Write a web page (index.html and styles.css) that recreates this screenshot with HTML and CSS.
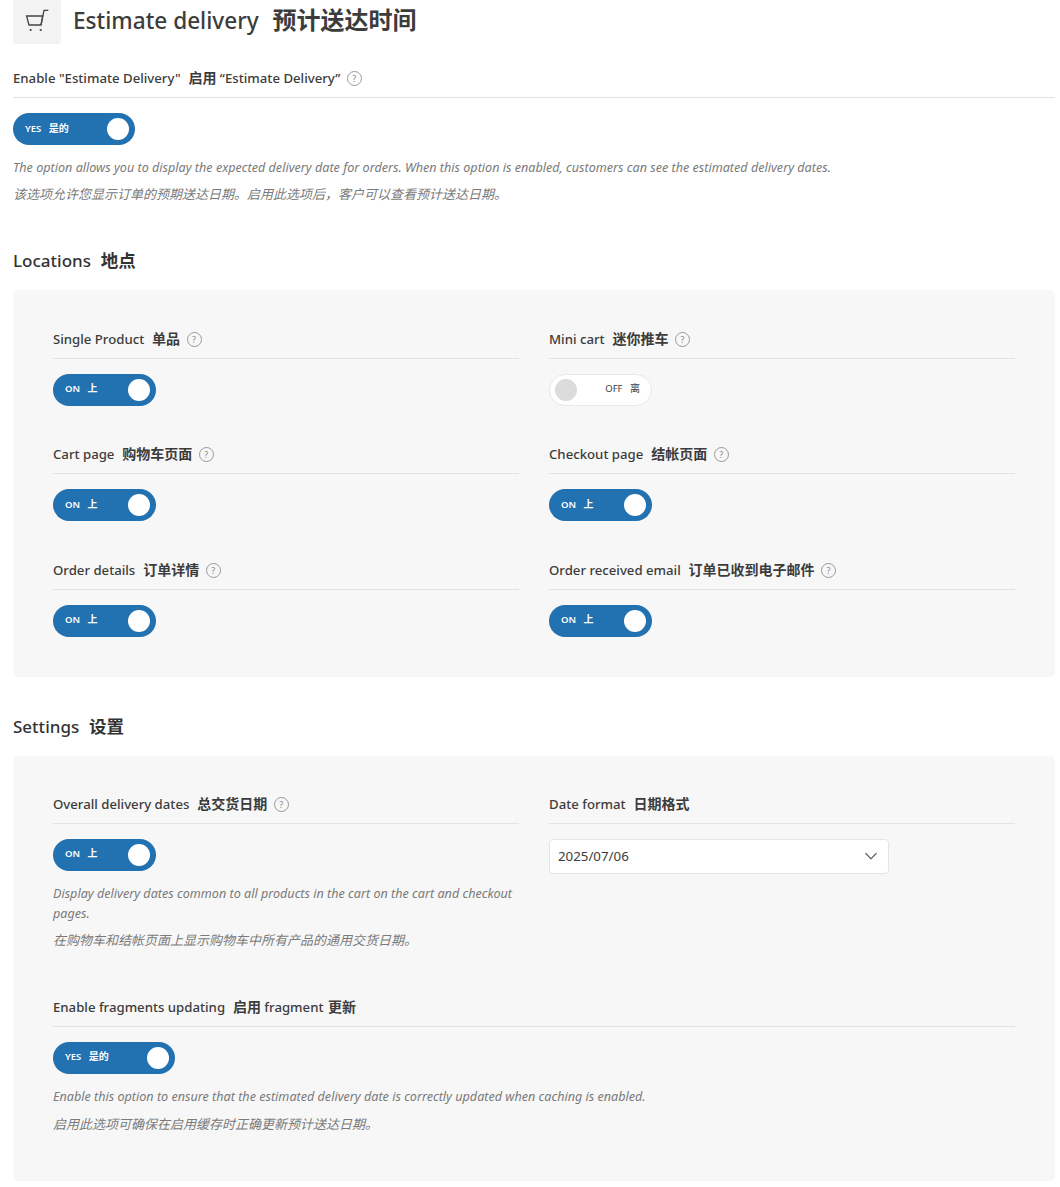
FILE: index.html
```html
<!DOCTYPE html>
<html lang="zh">
<head>
  <meta charset="UTF-8" />
  <meta name="viewport" content="width=device-width, initial-scale=1.0"/>
  <title>Estimate delivery</title>
  <link rel="stylesheet" href="styles.css">
</head>
<body>
<header class="page-head">
  <span class="head-icon">
    <svg width="24" height="24" viewBox="0 0 24 24" fill="none" stroke="#444" stroke-width="1.3">
      <path d="M1.6 8H17.7L16 17H4Z"/>
      <path d="M16 17L19 2.4H23.3"/>
      <circle cx="5.7" cy="22" r="1.1" fill="#444" stroke="none"/>
      <circle cx="15.7" cy="22" r="1.1" fill="#444" stroke="none"/>
    </svg>
  </span>
  <h1>Estimate delivery&nbsp; <span class="zh">预计送达时间</span></h1>
</header>

<div class="field top-field">
  <div class="label">Enable "Estimate Delivery"&nbsp; <span class="zh">启用</span> “Estimate Delivery” <span class="help">?</span></div>
  <div class="toggle yes"><span class="toggle-text">YES <span class="zh">是的</span></span><span class="knob"></span></div>
  <p class="desc">The option allows you to display the expected delivery date for orders. When this option is enabled, customers can see the estimated delivery dates.</p>
  <p class="desc zh-desc">该选项允许您显示订单的预期送达日期。启用此选项后，客户可以查看预计送达日期。</p>
</div>

<h2>Locations&nbsp; <span class="zh">地点</span></h2>
<section class="panel locations">
  <div class="field">
    <div class="label">Single Product&nbsp; <span class="zh">单品</span> <span class="help">?</span></div>
    <div class="toggle"><span class="toggle-text">ON <span class="zh">上</span></span><span class="knob"></span></div>
  </div>
  <div class="field">
    <div class="label">Mini cart&nbsp; <span class="zh">迷你推车</span> <span class="help">?</span></div>
    <div class="toggle off"><span class="knob"></span><span class="toggle-text">OFF <span class="zh">离</span></span></div>
  </div>
  <div class="field">
    <div class="label">Cart page&nbsp; <span class="zh">购物车页面</span> <span class="help">?</span></div>
    <div class="toggle"><span class="toggle-text">ON <span class="zh">上</span></span><span class="knob"></span></div>
  </div>
  <div class="field">
    <div class="label">Checkout page&nbsp; <span class="zh">结帐页面</span> <span class="help">?</span></div>
    <div class="toggle"><span class="toggle-text">ON <span class="zh">上</span></span><span class="knob"></span></div>
  </div>
  <div class="field">
    <div class="label">Order details&nbsp; <span class="zh">订单详情</span> <span class="help">?</span></div>
    <div class="toggle"><span class="toggle-text">ON <span class="zh">上</span></span><span class="knob"></span></div>
  </div>
  <div class="field">
    <div class="label">Order received email&nbsp; <span class="zh">订单已收到电子邮件</span> <span class="help">?</span></div>
    <div class="toggle"><span class="toggle-text">ON <span class="zh">上</span></span><span class="knob"></span></div>
  </div>
</section>

<h2 class="settings-title">Settings&nbsp; <span class="zh">设置</span></h2>
<section class="panel settings">
  <div class="field">
    <div class="label">Overall delivery dates&nbsp; <span class="zh">总交货日期</span> <span class="help">?</span></div>
    <div class="toggle"><span class="toggle-text">ON <span class="zh">上</span></span><span class="knob"></span></div>
    <p class="desc">Display delivery dates common to all products in the cart on the cart and checkout pages.</p>
    <p class="desc zh-desc">在购物车和结帐页面上显示购物车中所有产品的通用交货日期。</p>
  </div>
  <div class="field">
    <div class="label">Date format&nbsp; <span class="zh">日期格式</span></div>
    <div class="select">
      <span>2025/07/06</span>
      <svg width="14" height="8" viewBox="0 0 14 8" fill="none" stroke="#444" stroke-width="1.1"><path d="M1.5 1.2L7 6.8L12.5 1.2"/></svg>
    </div>
  </div>
  <div class="field wide">
    <div class="label">Enable fragments updating&nbsp; <span class="zh">启用</span> fragment <span class="zh">更新</span></div>
    <div class="toggle yes"><span class="toggle-text">YES <span class="zh">是的</span></span><span class="knob"></span></div>
    <p class="desc">Enable this option to ensure that the estimated delivery date is correctly updated when caching is enabled.</p>
    <p class="desc zh-desc">启用此选项可确保在启用缓存时正确更新预计送达日期。</p>
  </div>
</section>
</body>
</html>
```

FILE: styles.css
```css
body { font-family: "Noto Sans", "Noto Sans CJK SC", sans-serif; margin: 0; padding: 0 5px 0 13px; background: #fff; color: #3c3c3c; overflow: hidden; }
.page-head { display: flex; align-items: center; gap: 12px; margin-top: -4px; height: 48px; }
.head-icon { width: 48px; height: 48px; background: #f3f3f3; border-radius: 4px; display: flex; align-items: center; justify-content: center; }
h1 { margin: 0; padding-top: 1px; font-size: 22.6px; line-height: 48px; font-weight: 500; color: #3c3c3c; }
h1 .zh { font-size: 24px; font-weight: 700; margin-left: 2px; }
h2 { margin: 44px 0 0; font-size: 17px; line-height: 24px; font-weight: 500; color: #333; }
h2 .zh { font-size: 17.5px; font-weight: 700; margin-left: 1px; }
.settings-title { margin-top: 37px; }
.top-field { margin-top: 24px; }
.label { font-size: 13.2px; line-height: 20px; height: 20px; font-weight: 500; color: #3c3c3c; padding-bottom: 9px; border-bottom: 1px solid #e2e2e2; white-space: pre; }
.label .zh { font-size: 14px; font-weight: 700; margin-left: 1px; }
.help { display: inline-block; width: 13px; height: 13px; border: 1px solid #999; border-radius: 50%; color: #888; font-size: 9px; line-height: 13px; text-align: center; font-weight: 400; margin-left: 3px; vertical-align: 1px; }
.toggle { display: flex; align-items: center; justify-content: space-between; width: 103px; height: 32px; margin-top: 15px; padding: 0 6px 0 12px; box-sizing: border-box; border-radius: 16px; background: #2271b1; }
.toggle.yes { width: 122px; }
.toggle-text { font-size: 9.5px; font-weight: 600; color: #fff; white-space: pre; padding-bottom: 4px; }
.toggle-text .zh { font-size: 10px; font-weight: 700; margin-left: 5px; }
.knob { width: 22px; height: 22px; border-radius: 50%; background: #fff; }
.toggle.off { background: #fff; border: 1px solid #e8e8e8; padding: 0 11px 0 5px; }
.toggle.off .knob { background: #dcdcdc; }
.toggle.off .toggle-text { color: #3c3c3c; font-weight: 400; }
.toggle.off .toggle-text .zh { font-weight: 400; }
.desc { margin: 0; font-size: 12.6px; line-height: 20px; font-style: italic; color: #7a7a7a; }
.zh-desc { font-size: 13px; }
.toggle + .desc { margin-top: 13px; }
.desc + .desc { margin-top: 6px; }
.wide .desc + .desc { margin-top: 7px; }
.panel { display: grid; grid-template-columns: 466px 466px; column-gap: 30px; background: #f7f7f7; border-radius: 5px; padding: 38.7px 40px 40.3px; margin-top: 17px; }
.locations { row-gap: 38.5px; }
.settings { row-gap: 47px; padding-top: 38px; padding-bottom: 47px; }
.wide { grid-column: 1 / span 2; }
.select { display: flex; align-items: center; justify-content: space-between; width: 340px; height: 35px; margin-top: 15px; padding: 0 10px 0 8px; box-sizing: border-box; background: #fff; border: 1px solid #e4e4e4; border-radius: 4px; font-size: 13.3px; color: #3c3c3c; }
```
